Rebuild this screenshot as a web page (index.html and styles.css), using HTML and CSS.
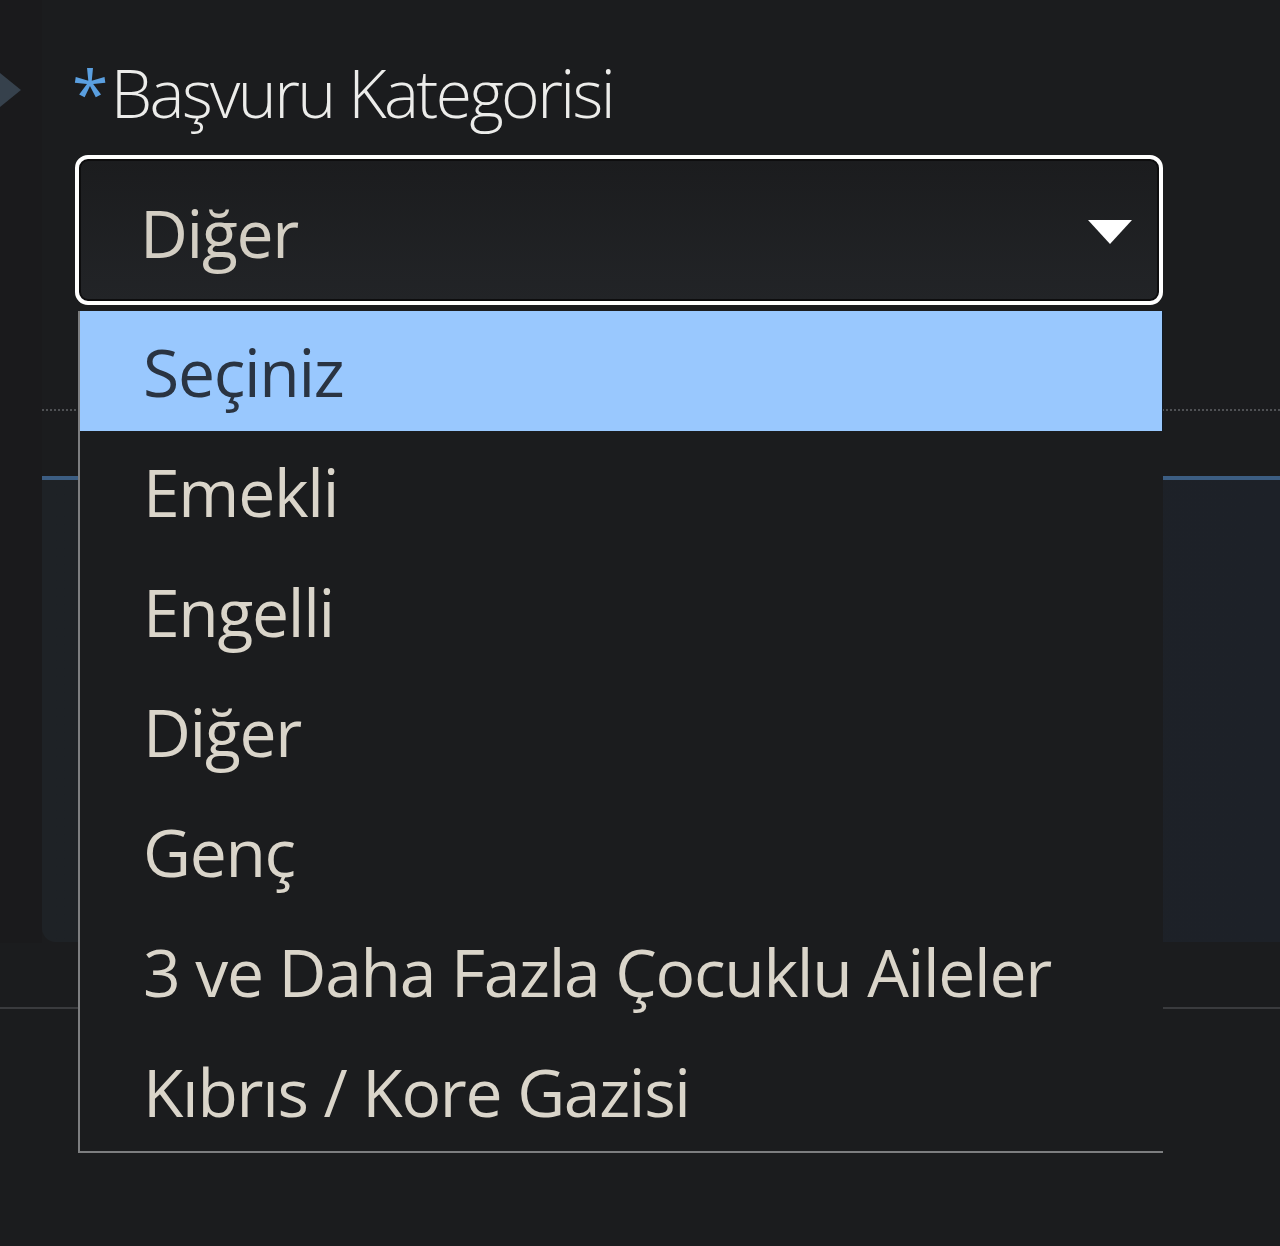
FILE: index.html
```html
<!DOCTYPE html>
<html lang="tr">
<head>
<meta charset="utf-8">
<title>Başvuru Kategorisi</title>
<link rel="stylesheet" href="styles.css">
</head>
<body>
<div class="page">
  <div class="top">
    <div class="rail">
      <svg class="rail-mark" width="24" height="50" viewBox="0 0 24 50"><polygon points="-10,0 21,25 -10,50" fill="#36414c"/></svg>
    </div>
    <div class="main">
      <div class="field">
        <div class="label"><span class="req">*</span>Başvuru Kategorisi</div>
        <div class="select">
          <span class="select-value">Diğer</span>
          <svg class="caret" width="44" height="24" viewBox="0 0 44 24"><polygon points="0,0 44,0 22,24" fill="#ffffff"/></svg>
        </div>
      </div>
      <div class="dotted"></div>
      <div class="panel"></div>
    </div>
  </div>
  <div class="rule"></div>

  <ul class="listbox">
    <li class="opt active">Seçiniz</li>
    <li class="opt">Emekli</li>
    <li class="opt">Engelli</li>
    <li class="opt">Diğer</li>
    <li class="opt">Genç</li>
    <li class="opt">3 ve Daha Fazla Çocuklu Aileler</li>
    <li class="opt">Kıbrıs / Kore Gazisi</li>
  </ul>
</div>
</body>
</html>
```

FILE: styles.css
```css
html, body {
  margin: 0;
  padding: 0;
  background: #1b1c1e;
}

.page {
  position: relative;
  width: 1280px;
  height: 1246px;
  overflow: hidden;
  font-family: "Open Sans", "Noto Sans", sans-serif;
}

.top {
  display: flex;
}

.rail {
  width: 42px;
  flex: none;
  background: #1a1a1c;
  padding-top: 65px;
  height: 943px;
  box-sizing: border-box;
}

.rail-mark {
  display: block;
}

.main {
  flex: 1;
  display: flex;
  flex-direction: column;
}

.field {
  padding-left: 33px;
  padding-top: 52px;
}

.label {
  height: 80px;
  line-height: 80px;
  font-size: 66px;
  font-weight: 300;
  letter-spacing: -2.6px;
  color: #ececea;
  white-space: nowrap;
}

.req {
  color: #5a9fe0;
  font-weight: 400;
  margin-right: 5px;
  margin-left: -3px;
}

.select {
  margin-top: 23px;
  width: 1088px;
  height: 150px;
  box-sizing: border-box;
  border: 4px solid #ffffff;
  border-radius: 13px;
  background: linear-gradient(#1b1c1e, #222427);
  box-shadow: inset 0 0 0 2px #0d0d0e;
  display: flex;
  align-items: center;
  justify-content: space-between;
  padding: 4px 27px 0 61px;
}

.select-value {
  font-size: 66px;
  letter-spacing: -1.3px;
  color: #d3cec3;
}

.caret {
  display: block;
}

.dotted {
  margin-top: 104px;
  border-top: 2px dotted #4f5154;
}

.panel {
  margin-top: 65px;
  height: 466px;
  box-sizing: border-box;
  border-top: 4px solid #3c5d82;
  background: linear-gradient(90deg, #1e2226, #1d2128);
  border-bottom-left-radius: 14px;
}

.rule {
  margin-top: 64px;
  height: 2px;
  background: #3a3b3e;
}

.listbox {
  position: absolute;
  left: 78px;
  top: 311px;
  width: 1085px;
  margin: 0;
  padding: 0;
  list-style: none;
  background: #1b1c1e;
  border-left: 2px solid #7d7e80;
  border-bottom: 2px solid #7d7e80;
  box-sizing: border-box;
}

.opt {
  height: 120px;
  display: flex;
  align-items: center;
  padding-left: 63px;
  box-sizing: border-box;
  font-size: 66px;
  letter-spacing: -1.3px;
  color: #dad5ca;
  white-space: nowrap;
}

.opt.active {
  background: #99c8fe;
  color: #2a3442;
  box-shadow: inset -1px 0 0 #0f1a26;
}
```
